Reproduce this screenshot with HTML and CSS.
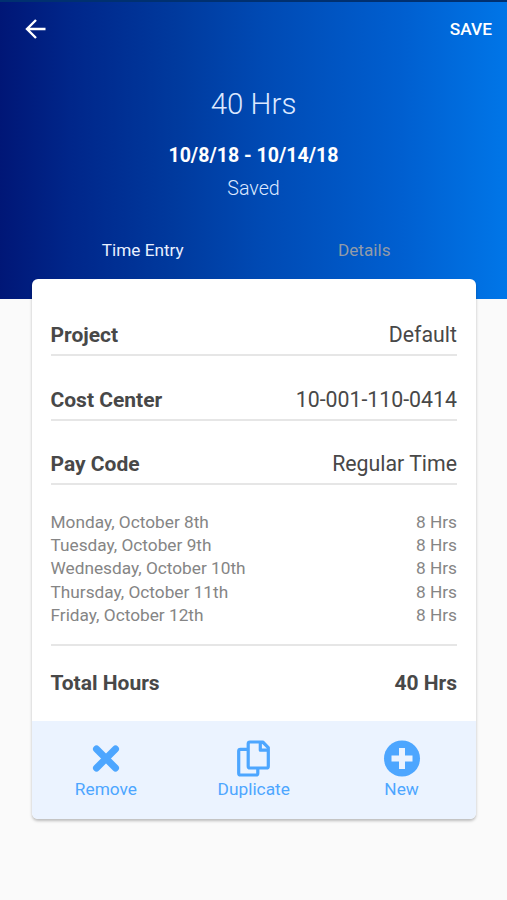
FILE: index.html
```html
<!DOCTYPE html>
<html lang="en">
<head>
  <meta charset="UTF-8">
  <meta name="viewport" content="width=device-width, initial-scale=1.0">
  <title>Time Entry</title>
  <link rel="stylesheet" href="styles.css">
</head>
<body>
  <header class="header">
    <nav class="toolbar">
      <a href="#" class="back" aria-label="Back">
        <svg width="22" height="22" viewBox="0 0 22 22"><path d="M20.500 11H3M11 2L2 11l9 9"/></svg>
      </a>
      <a href="#" class="save">SAVE</a>
    </nav>
    <h1 class="hours">40 Hrs</h1>
    <p class="dates">10/8/18 - 10/14/18</p>
    <p class="status">Saved</p>
    <div class="tabs">
      <a href="#" class="tab active">Time Entry</a>
      <a href="#" class="tab">Details</a>
    </div>
  </header>

  <main class="card">
    <div class="card-body">
      <div class="field"><b>Project</b><span>Default</span></div>
      <div class="field"><b>Cost Center</b><span>10-001-110-0414</span></div>
      <div class="field"><b>Pay Code</b><span>Regular Time</span></div>

      <ul class="days">
        <li><span>Monday, October 8th</span><span>8 Hrs</span></li>
        <li><span>Tuesday, October 9th</span><span>8 Hrs</span></li>
        <li><span>Wednesday, October 10th</span><span>8 Hrs</span></li>
        <li><span>Thursday, October 11th</span><span>8 Hrs</span></li>
        <li><span>Friday, October 12th</span><span>8 Hrs</span></li>
      </ul>

      <div class="total"><b>Total Hours</b><b>40 Hrs</b></div>
    </div>

    <footer class="actions">
      <a href="#" class="action">
        <svg width="38" height="38" viewBox="0 0 38 38"><path class="cross" d="M9.500 10l19 19M28.500 10l-19 19"/></svg>
        <span>Remove</span>
      </a>
      <a href="#" class="action">
        <svg width="38" height="38" viewBox="0 0 38 38"><path class="outline" d="M12 10.300H5.500q-1.800 0-1.800 1.800v22.100q0 1.800 1.800 1.800H21q1.800 0 1.800-1.800V30M15 3h12.700l5.600 5.600v18.600q0 1.800-1.800 1.800H15q-1.800 0-1.800-1.800V4.800Q13.200 3 15 3zM25.300 3.500v7.700H33"/></svg>
        <span>Duplicate</span>
      </a>
      <a href="#" class="action">
        <svg width="38" height="38" viewBox="0 0 38 38"><circle class="disc" cx="19" cy="19.500" r="18"/><path class="plus" d="M19 9v21M8.500 19.500h21"/></svg>
        <span>New</span>
      </a>
    </footer>
  </main>
</body>
</html>
```
FILE: styles.css
```css
* {
  box-sizing: border-box;
}
body {
  margin: 0;
  min-height: 900px;
  background: #fafafa;
  font-family: Roboto, sans-serif;
  color: #484848;
}
a {
  color: inherit;
  text-decoration: none;
}
h1, p, ul {
  margin: 0;
  padding: 0;
}
.header {
  height: 299px;
  border-top: 2px solid #003070;
  background: linear-gradient(90.5deg, #001676 0%, #00268a 14%, #003a9e 35%, #004ab4 52%, #005fd0 79%, #0076e8 100%);
  color: #fff;
  text-align: center;
}
.toolbar {
  display: flex;
  justify-content: space-between;
  align-items: center;
  height: 54px;
  padding: 0 15px 0 25px;
}
.back svg {
  display: block;
  fill: none;
  stroke: #fff;
  stroke-width: 2.4;
}
.save {
  font-size: 17.300px;
  font-weight: 500;
}
.hours {
  margin-top: 28px;
  font-size: 29.500px;
  line-height: 40px;
  font-weight: 300;
  color: #dce8ff;
}
.dates {
  margin-top: 17px;
  font-size: 19.600px;
  line-height: 30px;
  font-weight: 700;
}
.status {
  margin-top: 3px;
  font-size: 19.700px;
  line-height: 30px;
  font-weight: 300;
  color: #dce8ff;
}
.tabs {
  display: flex;
  margin: 31px 32px 0;
}
.tab {
  flex: 1;
  font-size: 17.200px;
  line-height: 30px;
  color: #929ba8;
}
.tab.active {
  color: #e8f0ff;
}
.card {
  margin: -20px 31.500px 0 32px;
  border-radius: 6px;
  background: #fff;
  box-shadow: 0 2px 3px rgba(0, 0, 0, 0.25);
  overflow: hidden;
  position: relative;
}
.card-body {
  height: 442px;
  padding: 36px 18.500px 0 18.500px;
}
.field, .total {
  display: flex;
  justify-content: space-between;
  font-size: 21px;
  line-height: 40px;
}
.field {
  height: 41px;
  margin-bottom: 23.700px;
  border-bottom: 2px solid #e6e6e6;
}
.field span {
  font-size: 21.300px;
}
.days {
  list-style: none;
  padding: 2px 0 17px;
  border-bottom: 2px solid #e6e6e6;
  font-size: 17.250px;
  line-height: 23.200px;
  color: #858585;
}
.days li {
  display: flex;
  justify-content: space-between;
}
.total {
  margin-top: 17px;
}
.actions {
  display: flex;
  height: 98px;
  padding-top: 18px;
  background: #ebf3ff;
}
.action {
  flex: 1;
  display: flex;
  flex-direction: column;
  align-items: center;
  font-size: 17.300px;
  line-height: 24px;
  color: #4da6ff;
}
.action svg {
  fill: none;
  stroke: #4da6ff;
}
.cross {
  stroke-width: 7;
  stroke-linecap: round;
}
.outline {
  stroke-width: 3.2;
  stroke-linejoin: round;
}
.disc {
  fill: #4da6ff;
  stroke: none;
}
.plus {
  stroke: #ebf3ff;
  stroke-width: 6;
}
```
